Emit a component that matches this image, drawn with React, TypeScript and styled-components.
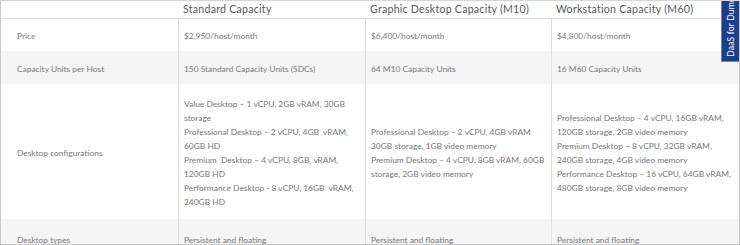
import React from "react";
import styled, { createGlobalStyle } from "styled-components";

const Global = createGlobalStyle`
  html, body { margin: 0; padding: 0; background: #fff; }
  body { font-family: Lato, "Open Sans", sans-serif; }
`;

const Frame = styled.div`
  position: relative;
  width: 740px;
  height: 245px;
  box-sizing: border-box;
  border: 1px solid #c8c8c8;
  border-top-color: #d6d6d6;
  overflow: hidden;
`;

const Grid = styled.div`
  display: grid;
  grid-template-columns: 177px 187px 186px 188px;
  grid-template-rows: 18px 32px 33px 135px 40px;
`;

const HeadCell = styled.div`
  display: flex;
  align-items: center;
  padding: 0 0 1px 5px;
  border-bottom: 1px solid #dcdcdc;
  font-size: 10.6px;
  color: #5a5a5a;
  letter-spacing: 0.25px;
`;

const Cell = styled.div<{ $shade?: boolean; $first?: boolean }>`
  display: flex;
  align-items: center;
  box-sizing: border-box;
  padding: 3px 2px 0 ${(p) => (p.$first ? "16px" : "5px")};
  background: ${(p) => (p.$shade ? "#f5f5f5" : "#fff")};
  border-left: ${(p) => (p.$first ? "none" : "1px solid #dedede")};
  font-size: 8.4px;
  line-height: 14.1px;
  color: #787878;
`;

const Lines = styled.div`
  display: flex;
  flex-direction: column;
`;

const Tab = styled.div`
  position: absolute;
  top: -1px;
  right: -1px;
  width: 19px;
  height: 62px;
  background: #1c3f8c;
  border: 1px solid #6f86b8;
  border-right: none;
  box-sizing: border-box;
  display: flex;
  align-items: flex-end;
  justify-content: center;
  overflow: hidden;
`;

const TabText = styled.span`
  writing-mode: vertical-rl;
  transform: rotate(180deg);
  white-space: nowrap;
  color: #fff;
  font-size: 8.5px;
  padding-top: 4px;
  letter-spacing: 0.2px;
`;

const rows: { label: string; shade: boolean; cells: string[][] }[] = [
  {
    label: "Price",
    shade: false,
    cells: [["$2,950/host/month"], ["$6,400/host/month"], ["$4,800/host/month"]],
  },
  {
    label: "Capacity Units per Host",
    shade: true,
    cells: [
      ["150 Standard Capacity Units (SDCs)"],
      ["64 M10 Capacity Units"],
      ["16 M60 Capacity Units"],
    ],
  },
  {
    label: "Desktop configurations",
    shade: false,
    cells: [
      [
        "Value Desktop – 1 vCPU, 2GB vRAM, 30GB storage",
        "Professional Desktop – 2 vCPU, 4GB\u00a0 vRAM, 60GB HD",
        "Premium\u00a0 Desktop – 4 vCPU, 8GB\u00a0 vRAM, 120GB HD",
        "Performance Desktop - 8 vCPU, 16GB\u00a0 vRAM, 240GB HD",
      ],
      [
        "Professional Desktop – 2 vCPU, 4GB vRAM 30GB storage, 1GB video memory",
        "Premium Desktop – 4 vCPU, 8GB vRAM, 60GB storage, 2GB video memory",
      ],
      [
        "Professional Desktop – 4 vCPU, 16GB vRAM, 120GB storage, 2GB video memory",
        "Premium Desktop – 8 vCPU, 32GB vRAM, 240GB storage, 4GB video memory",
        "Performance Desktop – 16 vCPU, 64GB vRAM, 480GB storage, 8GB video memory",
      ],
    ],
  },
  {
    label: "Desktop types",
    shade: true,
    cells: [["Persistent and floating"], ["Persistent and floating"], ["Persistent and floating"]],
  },
];

export default function App() {
  return (
    <>
      <Global />
      <Frame>
        <Grid>
          <HeadCell />
          <HeadCell>Standard Capacity</HeadCell>
          <HeadCell>Graphic Desktop Capacity (M10)</HeadCell>
          <HeadCell>Workstation Capacity (M60)</HeadCell>
          {rows.map((r) => (
            <React.Fragment key={r.label}>
              <Cell $first $shade={r.shade}>{r.label}</Cell>
              {r.cells.map((c, i) => (
                <Cell key={i} $shade={r.shade}>
                  <Lines>
                    {c.map((t) => (
                      <span key={t}>{t}</span>
                    ))}
                  </Lines>
                </Cell>
              ))}
            </React.Fragment>
          ))}
        </Grid>
        <Tab>
          <TabText>DaaS for Dummies</TabText>
        </Tab>
      </Frame>
    </>
  );
}
